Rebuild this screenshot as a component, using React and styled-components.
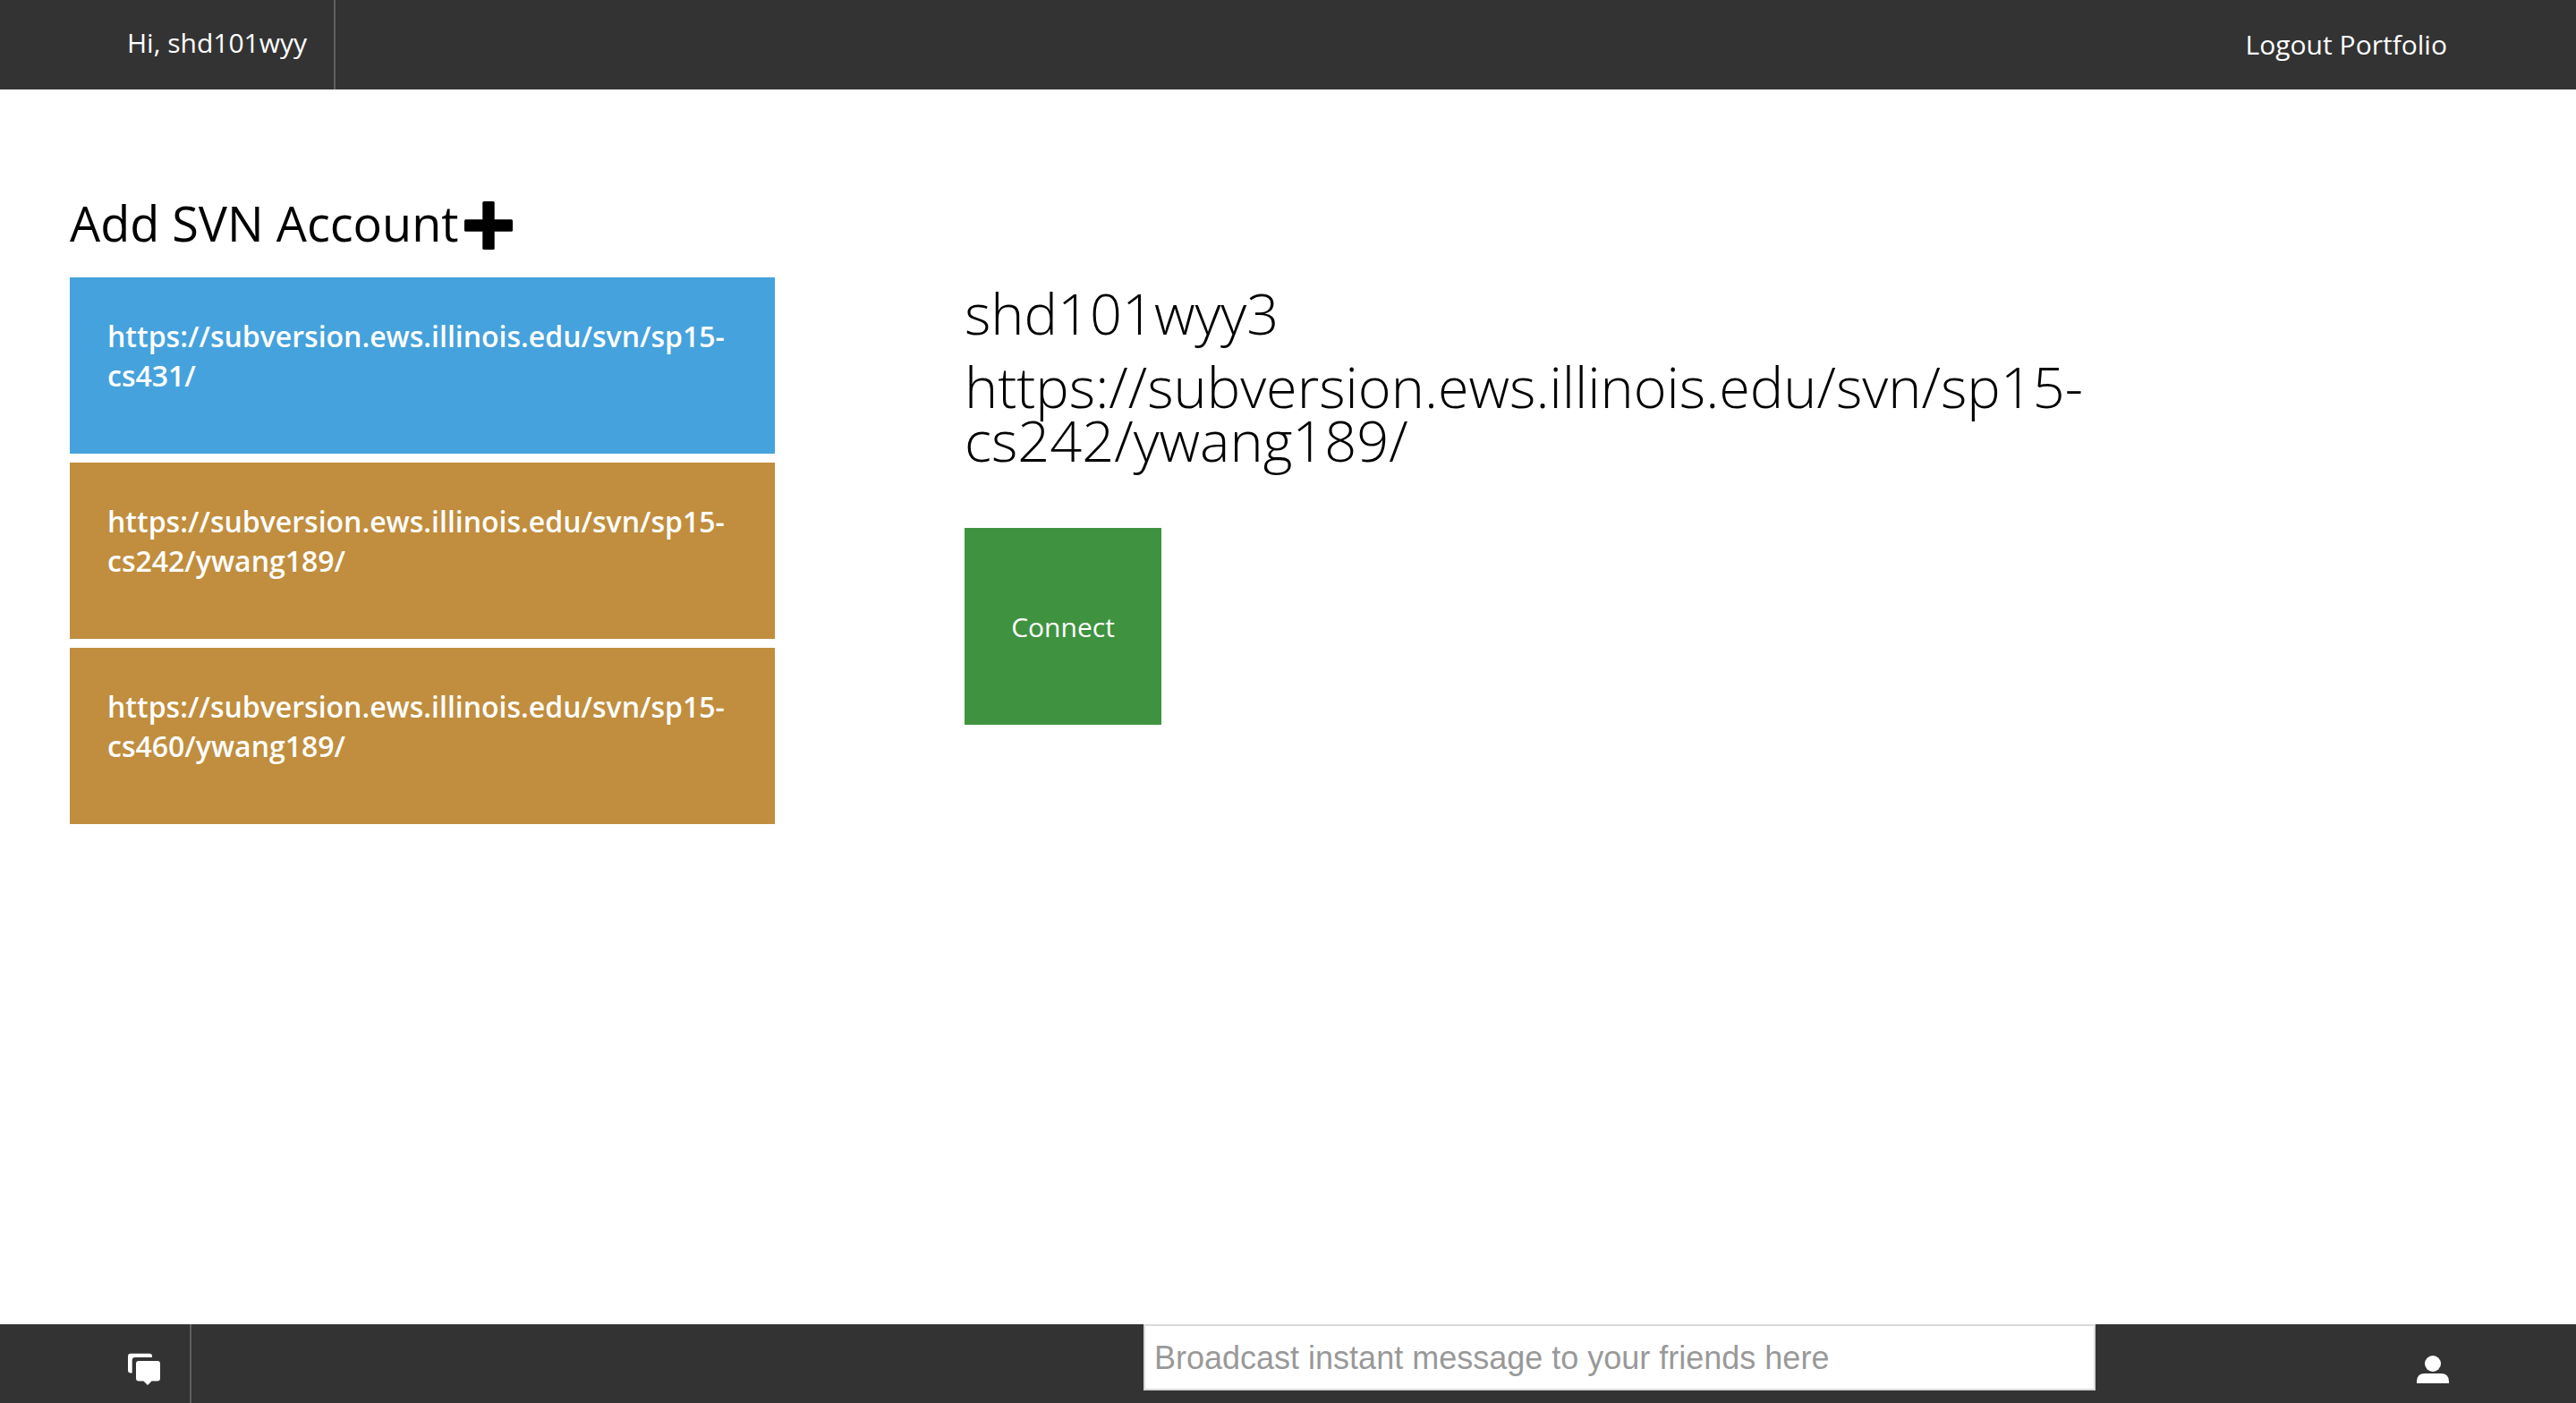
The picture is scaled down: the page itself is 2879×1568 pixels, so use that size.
import React from "react";
import styled, { createGlobalStyle } from "styled-components";

const GlobalStyle = createGlobalStyle`
  * { box-sizing: border-box; }
  body {
    margin: 0;
    background: #ffffff;
    color: #000000;
    font-family: "Open Sans", "Noto Sans", sans-serif;
    font-weight: 400;
  }
  a { color: inherit; text-decoration: none; }
  button { font: inherit; border: 0; cursor: pointer; }
`;

const Page = styled.div`
  min-height: 100vh;
  display: flex;
  flex-direction: column;
`;

const Bar = styled.header`
  display: flex;
  align-items: stretch;
  justify-content: space-between;
  height: ${(p) => p.$height}px;
  background: #333333;
  color: #ffffff;
  font-size: 30px;
  line-height: 44px;
`;

const UserCell = styled.div`
  display: flex;
  align-items: center;
  padding: 0 30px 4px 142px;
  border-right: 2px solid #5f5f5f;
`;

const BarLinks = styled.nav`
  display: flex;
  align-items: center;
  gap: 8px;
  padding: 0 144px 0 32px;
`;

const IconCell = styled.div`
  display: flex;
  align-items: flex-start;
  padding: 32px ${(p) => (p.$end ? 142 : 33)}px 0 ${(p) => (p.$end ? 33 : 143)}px;
  border-right: ${(p) => (p.$end ? "0" : "2px solid #5f5f5f")};
`;

const IconButton = styled.button`
  display: flex;
  padding: 0;
  background: none;
  color: #ffffff;
`;

const Main = styled.main`
  flex: 1;
  display: grid;
  grid-template-columns: minmax(0, 788fr) minmax(0, 1250fr) minmax(0, 339fr);
  column-gap: 212px;
  align-items: start;
  padding: 120px 0 60px 78px;
`;

const Sidebar = styled.section`
  display: flex;
  flex-direction: column;
`;

const HeadingRow = styled.div`
  display: flex;
  align-items: flex-start;
  gap: 6px;
  height: 60px;
  margin-bottom: 30px;
`;

const Heading = styled.h2`
  margin: 0;
  font-size: 54px;
  line-height: 58px;
  font-weight: 400;
`;

const AddButton = styled.button`
  display: flex;
  padding: 5px 0 0;
  background: none;
  color: #000000;
`;

const AccountList = styled.div`
  display: flex;
  flex-direction: column;
  gap: 10px;
`;

const AccountTile = styled.button`
  height: 197px;
  padding: 44px 42px;
  display: flex;
  align-items: flex-start;
  text-align: left;
  background: ${(p) => (p.$active ? "#45a2dc" : "#c08e3e")};
  color: #ffffff;
  font-size: 32px;
  line-height: 44px;
  font-weight: 600;
`;

const Details = styled.section`
  padding-top: 100px;
`;

const DetailLine = styled.h1`
  margin: 0 0 22px;
  font-size: 63px;
  line-height: 60px;
  font-weight: 300;
`;

const ConnectButton = styled.button`
  width: 220px;
  height: 220px;
  margin-top: 46px;
  padding: 2px 0 0;
  background: #3f9340;
  color: #ffffff;
  font-size: 30px;
  line-height: 44px;
`;

const MessageInput = styled.input`
  width: 1064px;
  height: 74px;
  margin-left: auto;
  padding: 2px 10px 0;
  border: 2px solid #d9d9d9;
  border-radius: 0;
  background: #ffffff;
  color: #000000;
  font-family: "Liberation Sans", Arial, sans-serif;
  font-size: 36px;
  &::placeholder { color: #999999; opacity: 1; }
`;

const FooterEnd = styled.div`
  display: flex;
  justify-content: flex-end;
  width: 537px;
`;

const ChatIcon = () => (
  <svg width="36" height="36" viewBox="0 0 36 36" fill="currentColor" aria-hidden="true">
    <path d="M3 0.700H24Q27 0.700 27 3.700V5H8Q4.700 5 4.700 8.300V22.500H3Q0 22.500 0 19.500V3.700Q0 0.700 3 0.700Z" />
    <path d="M12 9H33Q36 9 36 12V28.500Q36 31.500 33 31.500H26.500L22 36L17.500 31.500H12Q9 31.500 9 28.500V12Q9 9 12 9Z" />
  </svg>
);

const UserIcon = () => (
  <svg width="36" height="36" viewBox="0 0 36 36" fill="currentColor" aria-hidden="true">
    <circle cx="18" cy="12" r="9" />
    <path d="M0 34V32Q0 23 9 23H27Q36 23 36 32V34Z" />
  </svg>
);

const PlusIcon = () => (
  <svg width="54" height="54" viewBox="0 0 54 54" fill="currentColor" aria-hidden="true">
    <rect x="20.300" y="0" width="13.400" height="54" rx="1.500" />
    <rect x="0" y="20.300" width="54" height="13.400" rx="1.500" />
  </svg>
);

const accounts = [
  { url: "https://subversion.ews.illinois.edu/svn/sp15-cs431/", active: true },
  { url: "https://subversion.ews.illinois.edu/svn/sp15-cs242/ywang189/" },
  { url: "https://subversion.ews.illinois.edu/svn/sp15-cs460/ywang189/" },
];

export default function App() {
  return (
    <Page>
      <GlobalStyle />
      <Bar $height={100}>
        <UserCell>Hi, shd101wyy</UserCell>
        <BarLinks>
          <a href="#logout">Logout</a>
          <a href="#portfolio">Portfolio</a>
        </BarLinks>
      </Bar>
      <Main>
        <Sidebar>
          <HeadingRow>
            <Heading>Add SVN Account</Heading>
            <AddButton aria-label="Add SVN account"><PlusIcon /></AddButton>
          </HeadingRow>
          <AccountList>
            {accounts.map((account) => (
              <AccountTile key={account.url} $active={account.active}>{account.url}</AccountTile>
            ))}
          </AccountList>
        </Sidebar>
        <Details>
          <DetailLine>shd101wyy3</DetailLine>
          <DetailLine>https://subversion.ews.illinois.edu/svn/sp15-cs242/ywang189/</DetailLine>
          <ConnectButton>Connect</ConnectButton>
        </Details>
      </Main>
      <Bar as="footer" $height={88}>
        <IconCell><IconButton aria-label="Messages"><ChatIcon /></IconButton></IconCell>
        <MessageInput aria-label="Broadcast message" placeholder="Broadcast instant message to your friends here" />
        <FooterEnd>
          <IconCell $end><IconButton aria-label="Account"><UserIcon /></IconButton></IconCell>
        </FooterEnd>
      </Bar>
    </Page>
  );
}
